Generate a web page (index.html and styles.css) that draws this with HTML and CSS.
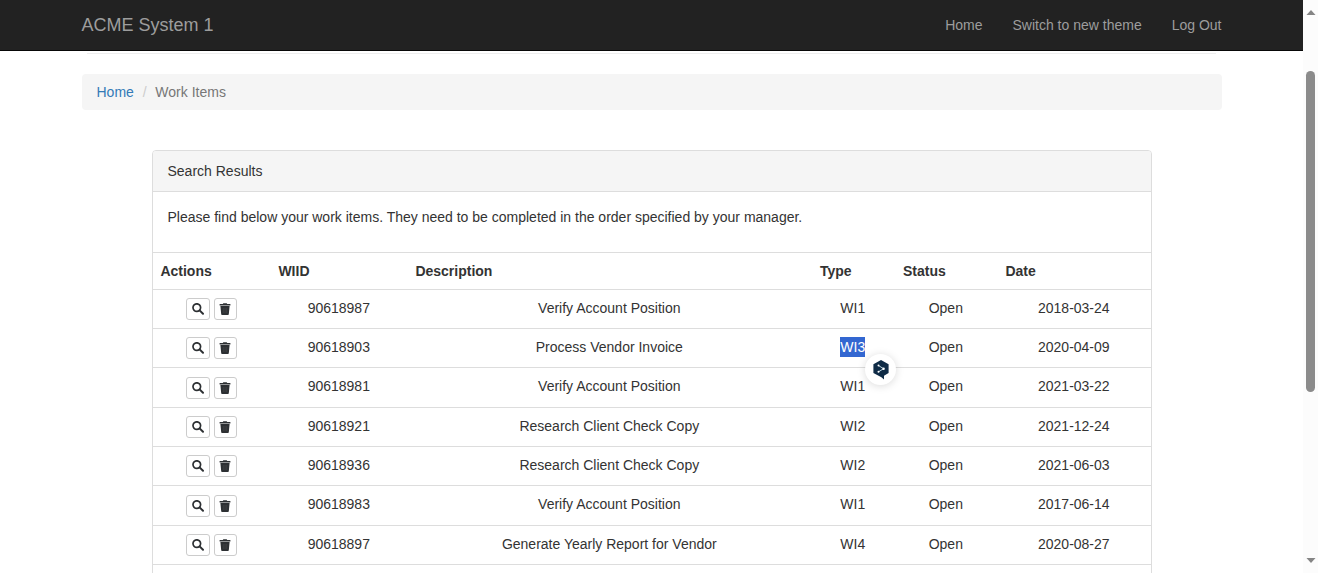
FILE: index.html
```html
<!DOCTYPE html>
<html lang="en">
<head>
<meta charset="utf-8">
<title>ACME System 1 - Work Items</title>
<link rel="stylesheet" href="styles.css">
</head>
<body>
<svg class="defs" aria-hidden="true">
  <symbol id="search" viewBox="0 0 12 12"><circle cx="4.8" cy="4.6" r="3.8" fill="none" stroke="#2d3033" stroke-width="1.7"/><path d="M7.6 7.4 11 10.8" stroke="#2d3033" stroke-width="2" stroke-linecap="round"/></symbol>
  <symbol id="trash" viewBox="0 0 12 12"><path fill="#2d3033" d="M.6 1h3.2l.5-.8h3.4l.5.8h3.2v1.5H.6zM1.4 3h9.2l-.8 8.2q-.1.7-.8.7H3q-.7 0-.8-.7z"/><path d="M4.3 5v5M6 5v5M7.7 5v5" stroke="#555" stroke-width=".4"/></symbol>
</svg>
<div class="window">
  <div class="page">
    <nav class="navbar">
      <a class="brand">ACME System 1</a>
      <div class="links"><a>Home</a><a>Switch to new theme</a><a>Log Out</a></div>
    </nav>
    <div class="rule"></div>
    <ol class="breadcrumb"><li><a>Home</a></li><li class="sep">/</li><li class="active">Work Items</li></ol>
    <section class="panel">
      <header class="panel-heading">Search Results</header>
      <p class="panel-body">Please find below your work items. They need to be completed in the order specified by your manager.</p>
      <table class="items">
        <colgroup><col class="c-actions"><col class="c-wiid"><col class="c-desc"><col class="c-type"><col class="c-status"><col class="c-date"></colgroup>
        <thead><tr><th>Actions</th><th>WIID</th><th>Description</th><th>Type</th><th>Status</th><th>Date</th></tr></thead>
        <tbody>
          <tr><td><div class="buttons"><button><svg><use href="#search"/></svg></button><button><svg><use href="#trash"/></svg></button></div></td><td>90618987</td><td>Verify Account Position</td><td>WI1</td><td>Open</td><td>2018-03-24</td></tr>
          <tr><td><div class="buttons"><button><svg><use href="#search"/></svg></button><button><svg><use href="#trash"/></svg></button></div></td><td>90618903</td><td>Process Vendor Invoice</td><td><span class="selected">WI3<span class="bubble"><svg viewBox="0 0 16 20"><path fill="#0f2b46" d="M8 0 15.6 4.3V13L11 15.7V19.5L8.4 17.2 .4 13V4.3z"/><path d="M5.5 5.6 10.6 8.7 5.5 11.8" fill="none" stroke="#b9d4df" stroke-width="1"/><g fill="#fff"><circle cx="5.5" cy="5.6" r="1"/><circle cx="10.6" cy="8.7" r="1.2"/><circle cx="5.5" cy="11.8" r="1"/></g></svg></span></span></td><td>Open</td><td>2020-04-09</td></tr>
          <tr class="tall"><td><div class="buttons"><button><svg><use href="#search"/></svg></button><button><svg><use href="#trash"/></svg></button></div></td><td>90618981</td><td>Verify Account Position</td><td>WI1</td><td>Open</td><td>2021-03-22</td></tr>
          <tr><td><div class="buttons"><button><svg><use href="#search"/></svg></button><button><svg><use href="#trash"/></svg></button></div></td><td>90618921</td><td>Research Client Check Copy</td><td>WI2</td><td>Open</td><td>2021-12-24</td></tr>
          <tr><td><div class="buttons"><button><svg><use href="#search"/></svg></button><button><svg><use href="#trash"/></svg></button></div></td><td>90618936</td><td>Research Client Check Copy</td><td>WI2</td><td>Open</td><td>2021-06-03</td></tr>
          <tr class="tall"><td><div class="buttons"><button><svg><use href="#search"/></svg></button><button><svg><use href="#trash"/></svg></button></div></td><td>90618983</td><td>Verify Account Position</td><td>WI1</td><td>Open</td><td>2017-06-14</td></tr>
          <tr><td><div class="buttons"><button><svg><use href="#search"/></svg></button><button><svg><use href="#trash"/></svg></button></div></td><td>90618897</td><td>Generate Yearly Report for Vendor</td><td>WI4</td><td>Open</td><td>2020-08-27</td></tr>
          <tr><td></td><td></td><td></td><td></td><td></td><td></td></tr>
        </tbody>
      </table>
    </section>
  </div>
  <div class="scrollbar">
    <svg class="arrow" viewBox="0 0 10 5"><path d="M5 0 9.5 5H.5z" fill="#858585"/></svg>
    <div class="thumb"></div>
    <svg class="arrow" viewBox="0 0 10 5"><path d="M5 5 9.5 0H.5z" fill="#858585"/></svg>
  </div>
</div>
</body>
</html>
```

FILE: styles.css
```css
* { box-sizing: border-box; }
body {
  margin: 0;
  font: 14px/20px "Liberation Sans", Arial, sans-serif;
  color: #333;
  background: #fff;
}
.defs { display: none; }
.window { display: flex; height: 573px; overflow: hidden; }
.page { width: 1303px; height: 573px; overflow: hidden; }

.navbar {
  display: flex;
  justify-content: space-between;
  height: 51px;
  padding: 15px 81.5px;
  background: #222;
  border-bottom: 1px solid #080808;
  color: #9d9d9d;
}
.brand { font-size: 18px; }
.links { display: flex; gap: 30px; }
.rule { height: 1px; margin: 2px 87px 20px; background: #eee; }

.breadcrumb {
  display: flex;
  height: 36px;
  margin: 0 81.5px 40px;
  padding: 8px 15px;
  background: #f5f5f5;
  border-radius: 4px;
  list-style: none;
}
.breadcrumb a { color: #337ab7; }
.breadcrumb .sep { width: 21.5px; text-align: center; color: #ccc; }
.breadcrumb .active { color: #777; }

.panel {
  width: 1000px;
  margin-left: 152px;
  border: 1px solid #ddd;
  border-radius: 4px;
}
.panel-heading {
  height: 41px;
  padding: 10px 14.5px;
  background: #f5f5f5;
  border-bottom: 1px solid #ddd;
  border-radius: 3px 3px 0 0;
}
.panel-body { height: 60px; margin: 0; padding: 15px 14.5px; }

.items {
  width: 998px;
  table-layout: fixed;
  border-spacing: 0;
}
.c-actions { width: 118px; }
.c-wiid { width: 137px; }
.c-desc { width: 404px; }
.c-type { width: 83px; }
.c-status { width: 103px; }
.c-date { width: 153px; }
.items th, .items td {
  height: 39px;
  padding: 8px 8.8px 0 7.4px;
  border-top: 1px solid #ddd;
  vertical-align: top;
  text-align: center;
}
.items th { height: 37px; text-align: left; }
.items th:nth-child(4), .items th:nth-child(5) { padding-left: 8px; }
.items .tall td { height: 40px; }
.items td:first-child { padding: 8px 9px 0 7px; }
.items .tall td:first-child { padding-top: 9px; }

.buttons { display: flex; justify-content: center; gap: 4px; height: 22px; }
.buttons button {
  display: flex;
  align-items: center;
  justify-content: center;
  width: 24px;
  height: 22px;
  padding: 0;
  border: 1px solid #ccc;
  border-radius: 3px;
  background: #fff;
}
.buttons button:last-child { width: 23px; }
.buttons svg { width: 12px; height: 12px; margin: 0 0 1px 1px; }
.buttons button:last-child svg { margin-left: 0; }

.selected {
  position: relative;
  display: inline-block;
  background: #3367d1;
  color: #fff;
}
.bubble {
  position: absolute;
  left: 25px;
  top: 17px;
  z-index: 1;
  display: flex;
  align-items: center;
  justify-content: center;
  width: 31px;
  height: 31px;
  border-radius: 50%;
  background: #fff;
  box-shadow: 0 1px 8px rgba(0, 0, 0, .15);
}
.bubble svg { width: 16px; height: 20px; }

.scrollbar {
  display: flex;
  flex-direction: column;
  width: 15px;
  height: 573px;
  padding: 10px 2px 10px 3px;
  background: #fcfcfc;
}
.arrow { width: 10px; height: 5px; }
.thumb {
  width: 9px;
  height: 321px;
  margin: 56px 0 auto;
  border-radius: 5px;
  background: #8b8b8b;
}
```
